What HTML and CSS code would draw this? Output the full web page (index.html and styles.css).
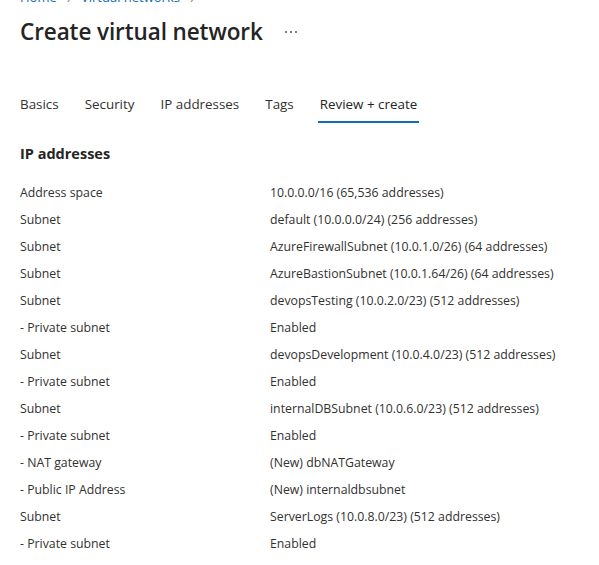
FILE: index.html
```html
<!DOCTYPE html>
<html>
<head>
<meta charset="utf-8">
<link rel="stylesheet" href="styles.css">
</head>
<body>
<div class="page">
  <nav class="crumbs">
    <span class="crumb">Home</span><span class="sep">&#x203A;</span><span class="crumb">Virtual networks</span><span class="sep">&#x203A;</span>
  </nav>
  <header class="titlebar">
    <h1 class="title">Create virtual network</h1>
    <span class="more"><i></i><i></i><i></i></span>
  </header>
  <div class="tabs">
    <span class="tab">Basics</span>
    <span class="tab">Security</span>
    <span class="tab">IP addresses</span>
    <span class="tab">Tags</span>
    <span class="tab active">Review + create</span>
  </div>
  <h2 class="section">IP addresses</h2>
  <div class="grid">
    <div class="k">Address space</div><div class="v">10.0.0.0/16 (65,536 addresses)</div>
    <div class="k">Subnet</div><div class="v">default (10.0.0.0/24) (256 addresses)</div>
    <div class="k">Subnet</div><div class="v">AzureFirewallSubnet (10.0.1.0/26) (64 addresses)</div>
    <div class="k">Subnet</div><div class="v">AzureBastionSubnet (10.0.1.64/26) (64 addresses)</div>
    <div class="k">Subnet</div><div class="v">devopsTesting (10.0.2.0/23) (512 addresses)</div>
    <div class="k">- Private subnet</div><div class="v">Enabled</div>
    <div class="k">Subnet</div><div class="v">devopsDevelopment (10.0.4.0/23) (512 addresses)</div>
    <div class="k">- Private subnet</div><div class="v">Enabled</div>
    <div class="k">Subnet</div><div class="v">internalDBSubnet (10.0.6.0/23) (512 addresses)</div>
    <div class="k">- Private subnet</div><div class="v">Enabled</div>
    <div class="k">- NAT gateway</div><div class="v">(New) dbNATGateway</div>
    <div class="k">- Public IP Address</div><div class="v">(New) internaldbsubnet</div>
    <div class="k">Subnet</div><div class="v">ServerLogs (10.0.8.0/23) (512 addresses)</div>
    <div class="k">- Private subnet</div><div class="v">Enabled</div>
  </div>
</div>
</body>
</html>
```
FILE: styles.css
```css
html, body {
  margin: 0;
  padding: 0;
  background: #ffffff;
}
body {
  font-family: "Open Sans", "Noto Sans", "Liberation Sans", sans-serif;
  color: #323130;
  overflow: hidden;
}
.page {
  padding-left: 20px;
}
.crumbs {
  display: flex;
  align-items: center;
  height: 20px;
  margin-top: -13px;
  font-size: 13px;
  color: #0f6cbd;
}
.sep {
  color: #8a8886;
  margin: 0 10px;
  font-size: 14px;
}
.titlebar {
  display: flex;
  align-items: center;
  height: 36px;
  margin-top: 6px;
}
.title {
  margin: 0;
  font-size: 22.5px;
  font-weight: 600;
  color: #242424;
  letter-spacing: -0.1px;
}
.more {
  display: flex;
  gap: 3px;
  margin-left: 22px;
  margin-top: 2px;
}
.more i {
  display: block;
  width: 2px;
  height: 2px;
  background: #7a7a7a;
}
.tabs {
  display: flex;
  gap: 22px;
  margin-top: 45px;
  margin-left: -2px;
  font-size: 13.4px;
  color: #323130;
}
.tab {
  padding: 0 2px 7px;
  border-bottom: 2px solid transparent;
  line-height: 20px;
}
.tab.active {
  border-bottom-color: #0f6cbd;
  color: #242424;
}
.section {
  margin: 19px 0 0;
  font-size: 14.5px;
  font-weight: 700;
  color: #242424;
  line-height: 24px;
}
.grid {
  display: grid;
  grid-template-columns: 250px 1fr;
  grid-auto-rows: 27px;
  margin-top: 13px;
  font-size: 12.3px;
  line-height: 27px;
  color: #323130;
}
```
